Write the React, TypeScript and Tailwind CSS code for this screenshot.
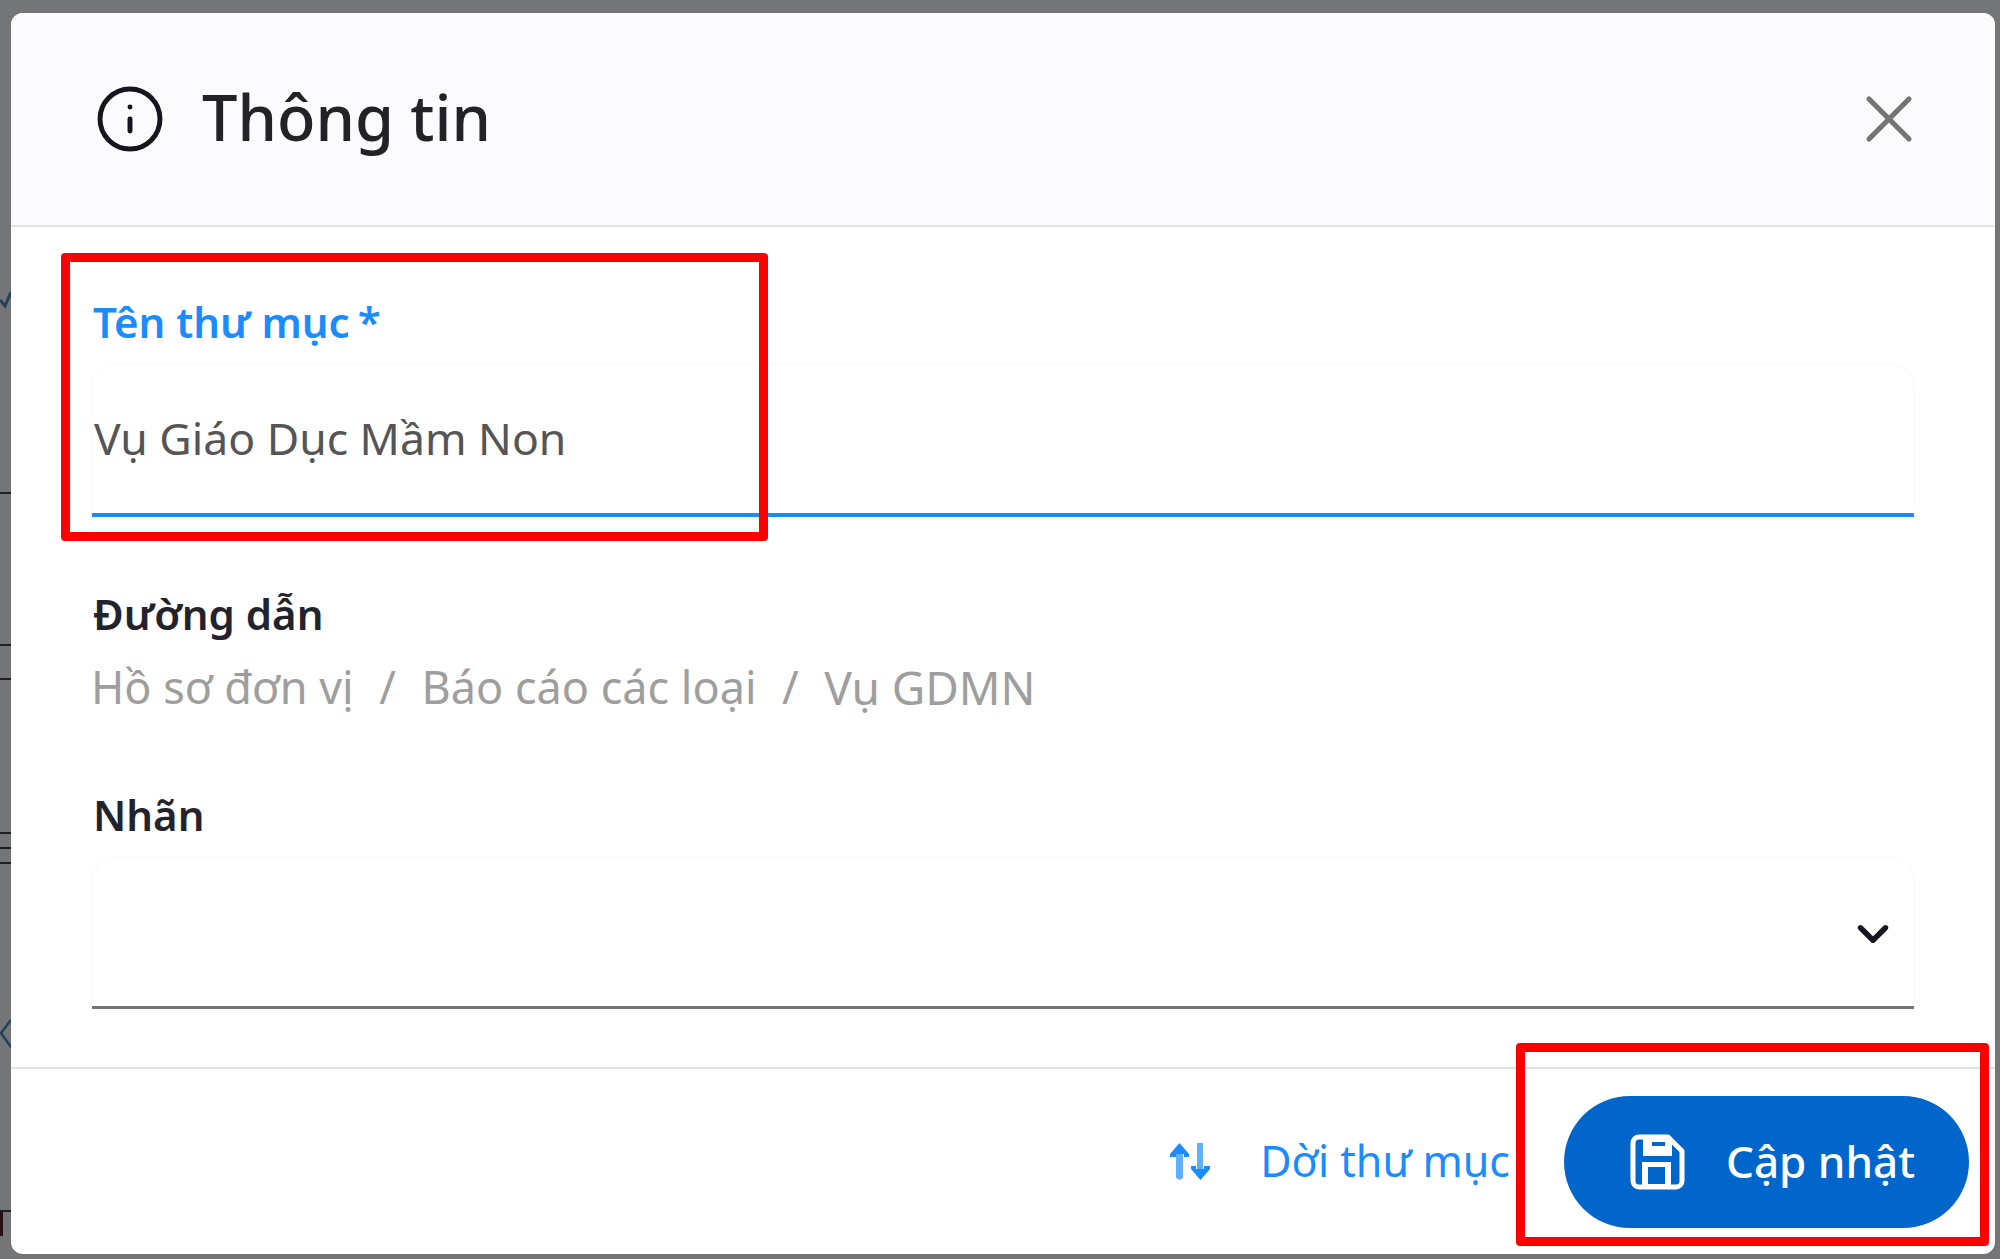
import { ChevronDown, Info, X } from 'lucide-react';

const font = "font-['Noto_Sans',sans-serif]";
const label = 'pl-[1px] text-[42px] font-semibold leading-[58px]';

function BackdropMarks() {
  // bits of the page behind the overlay, showing in the left gutter
  return (
    <svg className="absolute left-0 top-0" width="11" height="1259" fill="none" stroke="#1c1f24" strokeWidth="2">
      <path d="M0 300l5 6 6-14" stroke="#23405c" strokeWidth="3" />
      <path d="M0 493h11" />
      <path d="M0 645h11M0 679h11" />
      <path d="M0 833h11M0 848h11M0 863h11" />
      <path d="M11 1020l-10 13 10 14" strokeWidth="2.500" stroke="#23405c" />
      <path d="M0 1211h11" />
      <rect x="0" y="1212" width="3" height="24" fill="#2a1014" stroke="none" />
    </svg>
  );
}

function SwapIcon() {
  return (
    <svg width="40" height="37" viewBox="0 0 40 37" className="shrink-0">
      <path d="M6 11h7v24l-3.500 2L6 35z" fill="#5fb0ff" />
      <path d="M9.500 0L19 11v3h-5v-3H6v3H0v-3z" fill="#1a8cff" />
      <path d="M27 0l3-0 3 0v26h-6z" fill="#5fb0ff" />
      <path d="M30.500 37L21 26v-3h5v3h8v-3h6v3z" fill="#1a8cff" />
    </svg>
  );
}

function FloppyIcon() {
  return (
    <svg width="55" height="56" viewBox="0 0 55 56" className="shrink-0">
      <path
        d="M9 3h29l14 14v30a6 6 0 0 1-6 6H9a6 6 0 0 1-6-6V9a6 6 0 0 1 6-6z"
        fill="none"
        stroke="#ffffff"
        strokeWidth="5"
        strokeLinejoin="round"
      />
      <path fillRule="evenodd" d="M13 3h29v19H13zM22 8v4h13V8z" fill="#ffffff" />
      <path fillRule="evenodd" d="M12 28h29v25H12zM18 33v17h17V33z" fill="#ffffff" />
    </svg>
  );
}

export default function App() {
  return (
    <div className={`relative h-[1259px] w-[2000px] overflow-hidden bg-[#747576] pb-[5px] pl-[11px] pr-[5px] pt-[13px] ${font}`}>
      <BackdropMarks />
      <div className="flex h-full flex-col overflow-hidden rounded-[12px] bg-white">
        {/* Header */}
        <div className="flex h-[214px] shrink-0 items-center border-b-[2px] border-[#e3e3e3] bg-[#fbfbfd] pl-[83px] pr-[66px]">
          <Info size={72} strokeWidth={1.65} className="text-[#15151f]" />
          <span className="mb-[5px] ml-[36px] text-[63px] font-medium leading-none text-[#222228]">Thông tin</span>
          <X size={80} strokeWidth={1.55} className="ml-auto text-[#757575]" />
        </div>

        {/* Body */}
        <div className="relative flex flex-1 flex-col px-[81px] pt-[66px]">
          <div className={`${label} text-[#1a8cff]`}>
            Tên thư mục<span className="ml-[8px]">*</span>
          </div>
          <div className="mt-[13px] flex h-[153px] items-center rounded-t-[24px] border-b-[4px] border-[#1a8cff] pl-[2px] text-[44.5px] text-[#555555] shadow-[0_0_2px_rgba(0,0,0,0.08)]">
            Vụ Giáo Dục Mầm Non
          </div>
          <div className={`mt-[68px] ${label} text-[#23232d]`}>Đường dẫn</div>
          <div className="-ml-[1px] mt-[14px] flex gap-[25.500px] text-[45px] leading-[60px] text-[#9e9e9e]">
            <span>Hồ sơ đơn vị</span>
            <span>/</span>
            <span>Báo cáo các loại</span>
            <span>/</span>
            <span className="text-[46px] leading-[60px]">Vụ GDMN</span>
          </div>
          <div className={`mt-[69px] ${label} text-[#23232d]`}>Nhãn</div>
          <div className="mt-[14px] flex h-[151px] items-center justify-end rounded-t-[24px] border-b-[3px] border-[#757575] pr-[16px] pt-[3px] shadow-[0_0_2px_rgba(0,0,0,0.08)]">
            <ChevronDown size={50} strokeWidth={2.6} className="text-[#15151f]" />
          </div>
        </div>

        {/* Footer */}
        <div className="flex h-[187px] shrink-0 items-center justify-end border-t-[2px] border-[#e3e3e3] pl-[81px] pr-[26px]">
          <SwapIcon />
          <span className="ml-[50px] text-[43px] text-[#1a8cff]">Dời thư mục</span>
          <div className="ml-[54px] flex h-[132px] w-[405px] items-center gap-[41px] rounded-full bg-[#0066cc] pl-[66px] text-white">
            <FloppyIcon />
            <span className="mb-[2px] text-[44px] font-medium">Cập nhật</span>
          </div>
        </div>
      </div>

      {/* annotation boxes */}
      <div className="absolute left-[61px] top-[253px] h-[288px] w-[707px] rounded-[4px] border-[9px] border-[#ff0000]" />
      <div className="absolute left-[1516px] top-[1043px] h-[203px] w-[473px] rounded-[4px] border-[9px] border-[#ff0000]" />
    </div>
  );
}
